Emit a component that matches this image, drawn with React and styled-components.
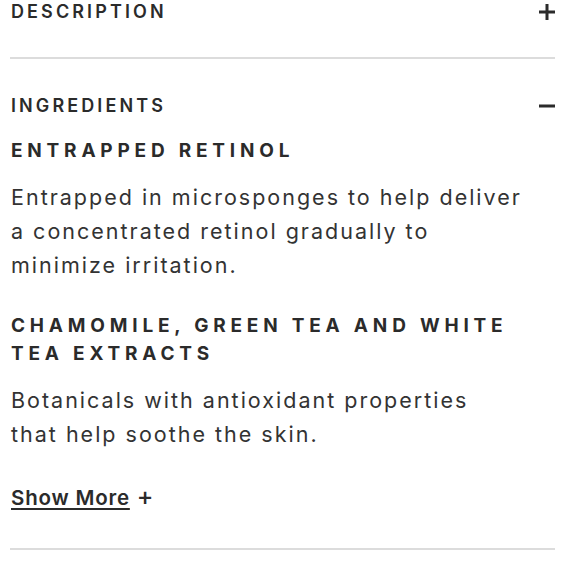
import React from 'react'
import styled, { createGlobalStyle } from 'styled-components'

const GlobalStyle = createGlobalStyle`
  body {
    margin: 0;
    background: #fff;
    font-family: Inter, "Liberation Sans", sans-serif;
    color: #333;
  }
`

const ingredients = [
  {
    title: 'Entrapped Retinol',
    text: 'Entrapped in microsponges to help deliver a concentrated retinol gradually to minimize irritation.',
    width: 516,
  },
  {
    title: 'Chamomile, Green Tea and White Tea Extracts',
    text: 'Botanicals with antioxidant properties that help soothe the skin.',
    width: 485,
  },
]

function PlusIcon() {
  return (
    <svg width="16" height="16" viewBox="0 0 16 16">
      <rect x="0" y="6.5" width="16" height="3" fill="currentColor" />
      <rect x="6.5" y="0" width="3" height="16" fill="currentColor" />
    </svg>
  )
}

function MinusIcon() {
  return (
    <svg width="16" height="16" viewBox="0 0 16 16">
      <rect x="0" y="6.5" width="16" height="3" fill="currentColor" />
    </svg>
  )
}

export default function App() {
  return (
    <>
      <GlobalStyle />
      <Accordion>
        <Panel $bottom={34}>
          <Header $top={0}>
            <h3>Description</h3>
            <PlusIcon />
          </Header>
        </Panel>
        <Panel $bottom={35}>
          <Header $top={35}>
            <h3>Ingredients</h3>
            <MinusIcon />
          </Header>
          <Body>
            {ingredients.map((item, index) => (
              <Item key={index}>
                <h4>{item.title}</h4>
                <Text $width={item.width}>{item.text}</Text>
              </Item>
            ))}
            <ShowMore>
              <a>Show More</a>
              <span>+</span>
            </ShowMore>
          </Body>
        </Panel>
      </Accordion>
    </>
  )
}

const Accordion = styled.div`
  width: 545px;
  margin-left: 10px;
`

const Panel = styled.section`
  border-bottom: 2px solid #dcdcdc;
  padding-bottom: ${(p) => p.$bottom}px;
`

const Header = styled.div`
  display: flex;
  align-items: center;
  justify-content: space-between;
  padding-top: ${(p) => p.$top}px;
  color: #2b2b2b;
  h3 {
    margin: 0;
    padding-left: 1px;
    font-size: 18px;
    line-height: 23px;
    font-weight: 600;
    letter-spacing: 3.1px;
    text-transform: uppercase;
  }
`

const Body = styled.div`
  padding-top: 20px;
  padding-left: 1px;
`

const Item = styled.div`
  margin-bottom: 30px;
  h4 {
    margin: 0 0 15px;
    font-size: 19px;
    line-height: 28px;
    font-weight: 700;
    letter-spacing: 4.8px;
    text-transform: uppercase;
    color: #2b2b2b;
    max-width: 520px;
  }
`

const Text = styled.p`
  margin: 0;
  font-size: 21.5px;
  line-height: 34px;
  letter-spacing: 2px;
  max-width: ${(p) => p.$width}px;
`

const ShowMore = styled.div`
  display: flex;
  align-items: baseline;
  gap: 7px;
  margin-top: 2px;
  font-size: 20.5px;
  line-height: 30px;
  font-weight: 600;
  letter-spacing: 0.8px;
  color: #2b2b2b;
  a {
    text-decoration: underline;
    text-decoration-thickness: 1.5px;
    text-underline-offset: 3px;
    cursor: pointer;
  }
  span {
    font-size: 25px;
    font-weight: 500;
  }
`
